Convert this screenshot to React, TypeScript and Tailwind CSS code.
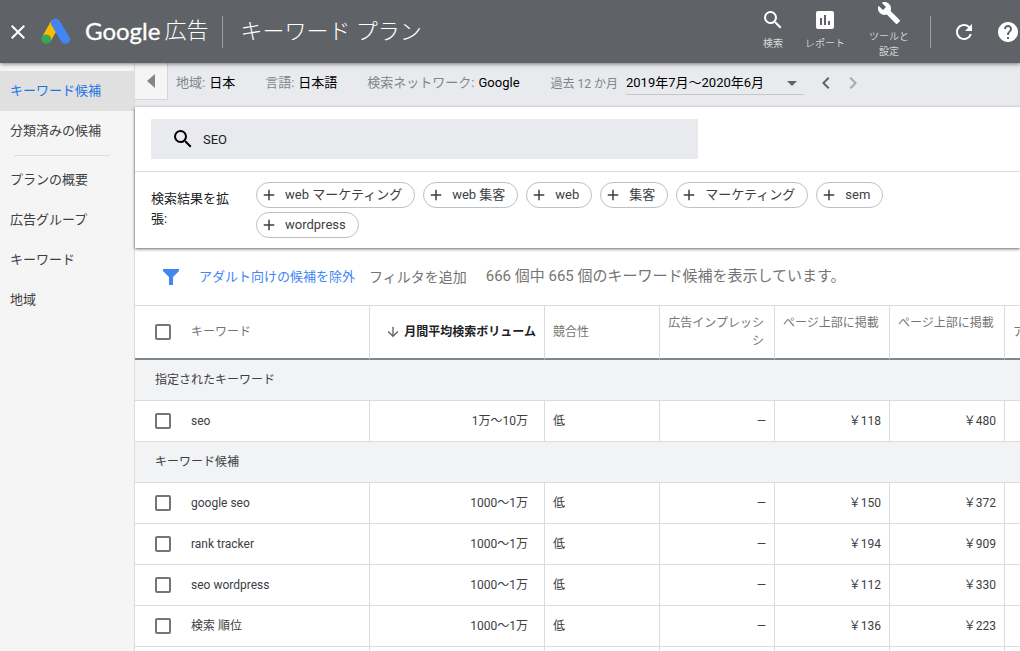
import type { ReactNode } from 'react';
import {
  MdAdd,
  MdArrowDownward,
  MdArrowDropDown,
  MdAssessment,
  MdBuild,
  MdChevronLeft,
  MdChevronRight,
  MdClose,
  MdHelp,
  MdRefresh,
  MdSearch,
} from 'react-icons/md';

type Row = { keyword: string; volume: string; competition: string; share: string; low: string; high: string };

const specified: Row[] = [
  { keyword: 'seo', volume: '1万〜10万', competition: '低', share: '—', low: '￥118', high: '￥480' },
];

const ideas: Row[] = [
  { keyword: 'google seo', volume: '1000〜1万', competition: '低', share: '—', low: '￥150', high: '￥372' },
  { keyword: 'rank tracker', volume: '1000〜1万', competition: '低', share: '—', low: '￥194', high: '￥909' },
  { keyword: 'seo wordpress', volume: '1000〜1万', competition: '低', share: '—', low: '￥112', high: '￥330' },
  { keyword: '検索 順位', volume: '1000〜1万', competition: '低', share: '—', low: '￥136', high: '￥223' },
];

const chips = ['web マーケティング', 'web 集客', 'web', '集客', 'マーケティング', 'sem', 'wordpress'];

const cell = 'border-r border-b border-[#dadce0]';

function AdsLogo() {
  return (
    <svg viewBox="0 0 30 28" className="h-7 w-[30px] shrink-0" aria-hidden="true">
      <path d="M1.2 19.8 10.4 3.6 18.6 8.4 9.4 24.6z" fill="#fbbc04" />
      <path d="M14.6 6.2 24.4 22.4" stroke="#4285f4" strokeWidth="9.2" strokeLinecap="round" />
      <circle cx="5.2" cy="22.2" r="4.8" fill="#34a853" />
    </svg>
  );
}

function Tool({ icon, children }: { icon: ReactNode; children: ReactNode }) {
  return (
    <button type="button" className="flex w-13 flex-col items-center gap-1 text-[10px] leading-[15px] font-light">
      {icon}
      <span>{children}</span>
    </button>
  );
}

function Header() {
  return (
    <header className="z-10 flex h-[63px] shrink-0 items-center bg-[#5f6368] text-white shadow-[0_1px_4px_rgba(0,0,0,0.5)]">
      <button type="button" aria-label="閉じる" className="ml-1.5 shrink-0">
        <MdClose className="size-6" />
      </button>
      <a href="#" className="ml-[11px] flex items-center gap-3.5 pb-0.5">
        <AdsLogo />
        <span className="flex items-center gap-1 whitespace-nowrap text-[22px] leading-8 font-light">
          <span className="font-[Lato] text-2xl font-normal [-webkit-text-stroke:0.3px_white]">Google</span>
          広告
        </span>
      </a>
      <h1 className="ml-3.5 flex h-8 items-center whitespace-nowrap border-l border-[#9aa0a6] pl-[17px] text-[22px] font-light">
        キーワード プラン
      </h1>
      <div className="ml-auto flex h-full items-center pb-1">
        <Tool icon={<MdSearch className="size-6" />}>検索</Tool>
        <Tool icon={<MdAssessment className="size-6" />}>レポート</Tool>
        <div className="w-3" />
        <Tool icon={<MdBuild className="size-6" />}>
          ツールと
          <br />
          設定
        </Tool>
      </div>
      <div className="ml-[15px] h-8 border-l border-[#9aa0a6]" />
      <button type="button" aria-label="更新" className="ml-[21px]">
        <MdRefresh className="size-6" />
      </button>
      <button type="button" aria-label="ヘルプ" className="ml-5">
        <MdHelp className="size-6" />
      </button>
    </header>
  );
}

function NavLink({ active, children }: { active?: boolean; children: string }) {
  return (
    <a
      href="#"
      aria-current={active ? 'page' : undefined}
      className={`flex h-10 items-center pl-2.5 ${active ? 'bg-[#e0e0e0] text-[#1a73e8]' : 'text-[#3c4043]'}`}
    >
      {children}
    </a>
  );
}

function Sidebar() {
  return (
    <nav className="w-[135px] shrink-0 border-r border-[#dadce0] bg-[#f5f5f5] pt-2 text-[13px]">
      <NavLink active>キーワード候補</NavLink>
      <NavLink>分類済みの候補</NavLink>
      <hr className="mt-1 mr-6 mb-1 ml-3.5 border-[#dadce0]" />
      <NavLink>プランの概要</NavLink>
      <NavLink>広告グループ</NavLink>
      <NavLink>キーワード</NavLink>
      <NavLink>地域</NavLink>
    </nav>
  );
}

function Setting({ label, value }: { label: string; value: string }) {
  return (
    <button type="button" className="flex items-baseline gap-1 whitespace-nowrap">
      <span className="text-[#80868b]">{label}</span>
      <span className="text-black">{value}</span>
    </button>
  );
}

function SettingsBar() {
  return (
    <div className="flex h-11 shrink-0 items-start bg-[#e8eaed] text-[13px]">
      <button
        type="button"
        aria-label="メニューを閉じる"
        className="flex h-[37px] w-[33px] shrink-0 items-center justify-center border-r border-b border-[#d4d6da] bg-[#f5f5f5]"
      >
        <svg viewBox="0 0 8 14" className="h-3.5 w-2 fill-[#80868b]" aria-hidden="true">
          <path d="M8 0v14L0 7z" />
        </svg>
      </button>
      <div className="flex h-10 items-center pl-2">
        <div className="flex gap-[30px]">
          <Setting label="地域:" value="日本" />
          <Setting label="言語:" value="日本語" />
          <Setting label="検索ネットワーク:" value="Google" />
        </div>
        <label htmlFor="period" className="ml-[31px] pt-0.5 whitespace-nowrap text-xs text-[#80868b]">
          過去 12 か月
        </label>
        <div className="relative ml-2">
          <select
            id="period"
            className="h-6 w-[178px] appearance-none border-b border-[#c4c7cc] bg-transparent text-black"
          >
            <option>2019年7月〜2020年6月</option>
          </select>
          <MdArrowDropDown className="pointer-events-none absolute top-0 right-0 size-6 text-[#5f6368]" />
        </div>
        <button type="button" aria-label="前の期間" className="ml-2.5">
          <MdChevronLeft className="size-6 text-[#5f6368]" />
        </button>
        <button type="button" aria-label="次の期間" disabled className="ml-[3px]">
          <MdChevronRight className="size-6 text-[#a5a8ac]" />
        </button>
      </div>
    </div>
  );
}

function SearchCard() {
  return (
    <section className="z-[1] shrink-0 bg-white text-[13px] shadow-[0_1px_3px_rgba(0,0,0,0.6)]">
      <div className="border-b border-[#dadce0] px-4 py-3">
        <div className="flex h-10 max-w-[547px] items-center bg-[#e8eaed] pl-5">
          <MdSearch className="size-6 shrink-0 text-black" />
          <input
            type="text"
            aria-label="キーワード"
            defaultValue="SEO"
            className="ml-2 h-full min-w-0 flex-1 bg-transparent text-[#202124] outline-none"
          />
        </div>
      </div>
      <div className="flex px-4 py-2.5">
        <p className="w-[105px] shrink-0 pt-[7px] pr-6 leading-5 text-[#202124]">検索結果を拡張:</p>
        <div className="flex max-w-[700px] flex-wrap gap-x-2 gap-y-1">
          {chips.map((chip) => (
            <button
              key={chip}
              type="button"
              className="flex h-[26px] items-center gap-[7px] rounded-full border border-[#bdc1c6] pr-3 pl-[3px] text-[#3c4043]"
            >
              <MdAdd className="size-[18px]" />
              {chip}
            </button>
          ))}
        </div>
      </div>
    </section>
  );
}

function FilterBar() {
  return (
    <div className="flex h-[57px] shrink-0 items-center pl-7 whitespace-nowrap">
      <svg viewBox="0 0 16 16" className="size-4 fill-[#4285f4]" aria-hidden="true">
        <path d="M0 0h16v2l-6 6v8H6V8L0 2z" />
      </svg>
      <button type="button" className="ml-5 text-[13px] text-[#4285f4]">
        アダルト向けの候補を除外
      </button>
      <button type="button" className="ml-3.5 text-sm text-[#757575]">
        フィルタを追加
      </button>
      <p className="ml-[19px] text-[15px] text-[#757575]">666 個中 665 個のキーワード候補を表示しています。</p>
    </div>
  );
}

function Check({ label }: { label: string }) {
  return (
    <input
      type="checkbox"
      aria-label={label}
      className="size-4 shrink-0 appearance-none rounded-xs border-2 border-[#757575] bg-white checked:bg-[#4285f4]"
    />
  );
}

function GroupRow({ children }: { children: string }) {
  return (
    <tr className="h-[41px] bg-[#f1f3f4]">
      <th colSpan={7} scope="rowgroup" className="border-b border-[#dadce0] pl-5 text-left font-normal">
        {children}
      </th>
    </tr>
  );
}

function DataRow({ row }: { row: Row }) {
  return (
    <tr className="h-[41px]">
      <td className={cell}>
        <div className="flex items-center gap-5 pl-5">
          <Check label={row.keyword} />
          {row.keyword}
        </div>
      </td>
      <td className={`${cell} pr-4 text-right`}>{row.volume}</td>
      <td className={`${cell} pl-2`}>{row.competition}</td>
      <td className={`${cell} pr-2 text-right`}>{row.share}</td>
      <td className={`${cell} pr-2 text-right`}>{row.low}</td>
      <td className={`${cell} pr-2 text-right`}>{row.high}</td>
      <td className={cell} />
    </tr>
  );
}

function KeywordTable() {
  return (
    <div className="min-h-0 flex-1 overflow-hidden border-t border-[#dadce0]">
      <table className="w-full min-w-[985px] table-fixed border-separate border-spacing-0 text-xs text-[#3c4043]">
        <colgroup>
          <col className="w-[235px]" />
          <col className="w-[175px]" />
          <col className="w-[115px]" />
          <col className="w-[115px]" />
          <col className="w-[115px]" />
          <col className="w-[115px]" />
          <col />
        </colgroup>
        <thead className="text-[#757575]">
          <tr className="h-[54px] *:border-r *:border-b-2 *:border-[#dadce0] *:border-b-[#80868b] *:font-normal">
            <th scope="col">
              <div className="flex items-center gap-5 pl-5">
                <Check label="すべて選択" />
                キーワード
              </div>
            </th>
            <th scope="col">
              <div className="flex items-center justify-end gap-[3px] pr-2 font-bold whitespace-nowrap text-[#202124]">
                <MdArrowDownward className="size-4 text-[#5f6368]" />
                月間平均検索ボリューム
              </div>
            </th>
            <th scope="col" className="pl-2 text-left">
              競合性
            </th>
            <th scope="col" className="pr-2.5 pl-2 text-right leading-[18px]">
              広告インプレッシシ
            </th>
            <th scope="col" className="overflow-hidden pt-2 pr-2 pl-2 text-left align-top leading-[18px] whitespace-nowrap">
              ページ上部に掲載
            </th>
            <th scope="col" className="overflow-hidden pt-2 pr-2 pl-2 text-left align-top leading-[18px] whitespace-nowrap">
              ページ上部に掲載
            </th>
            <th scope="col" className="pl-2 text-left">
              ア
            </th>
          </tr>
        </thead>
        <tbody>
          <GroupRow>指定されたキーワード</GroupRow>
          {specified.map((row) => (
            <DataRow key={row.keyword} row={row} />
          ))}
          <GroupRow>キーワード候補</GroupRow>
          {ideas.map((row) => (
            <DataRow key={row.keyword} row={row} />
          ))}
          <tr className="h-[41px]">
            {[0, 1, 2, 3, 4, 5, 6].map((i) => (
              <td key={i} className={cell} />
            ))}
          </tr>
        </tbody>
      </table>
    </div>
  );
}

export default function App() {
  return (
    <div
      lang="ja"
      className="flex h-screen flex-col overflow-hidden bg-white font-[Roboto,'Noto_Sans_CJK_JP',sans-serif]"
    >
      <Header />
      <div className="flex min-h-0 flex-1">
        <Sidebar />
        <main className="flex min-w-0 flex-1 flex-col">
          <SettingsBar />
          <SearchCard />
          <FilterBar />
          <KeywordTable />
        </main>
      </div>
    </div>
  );
}
